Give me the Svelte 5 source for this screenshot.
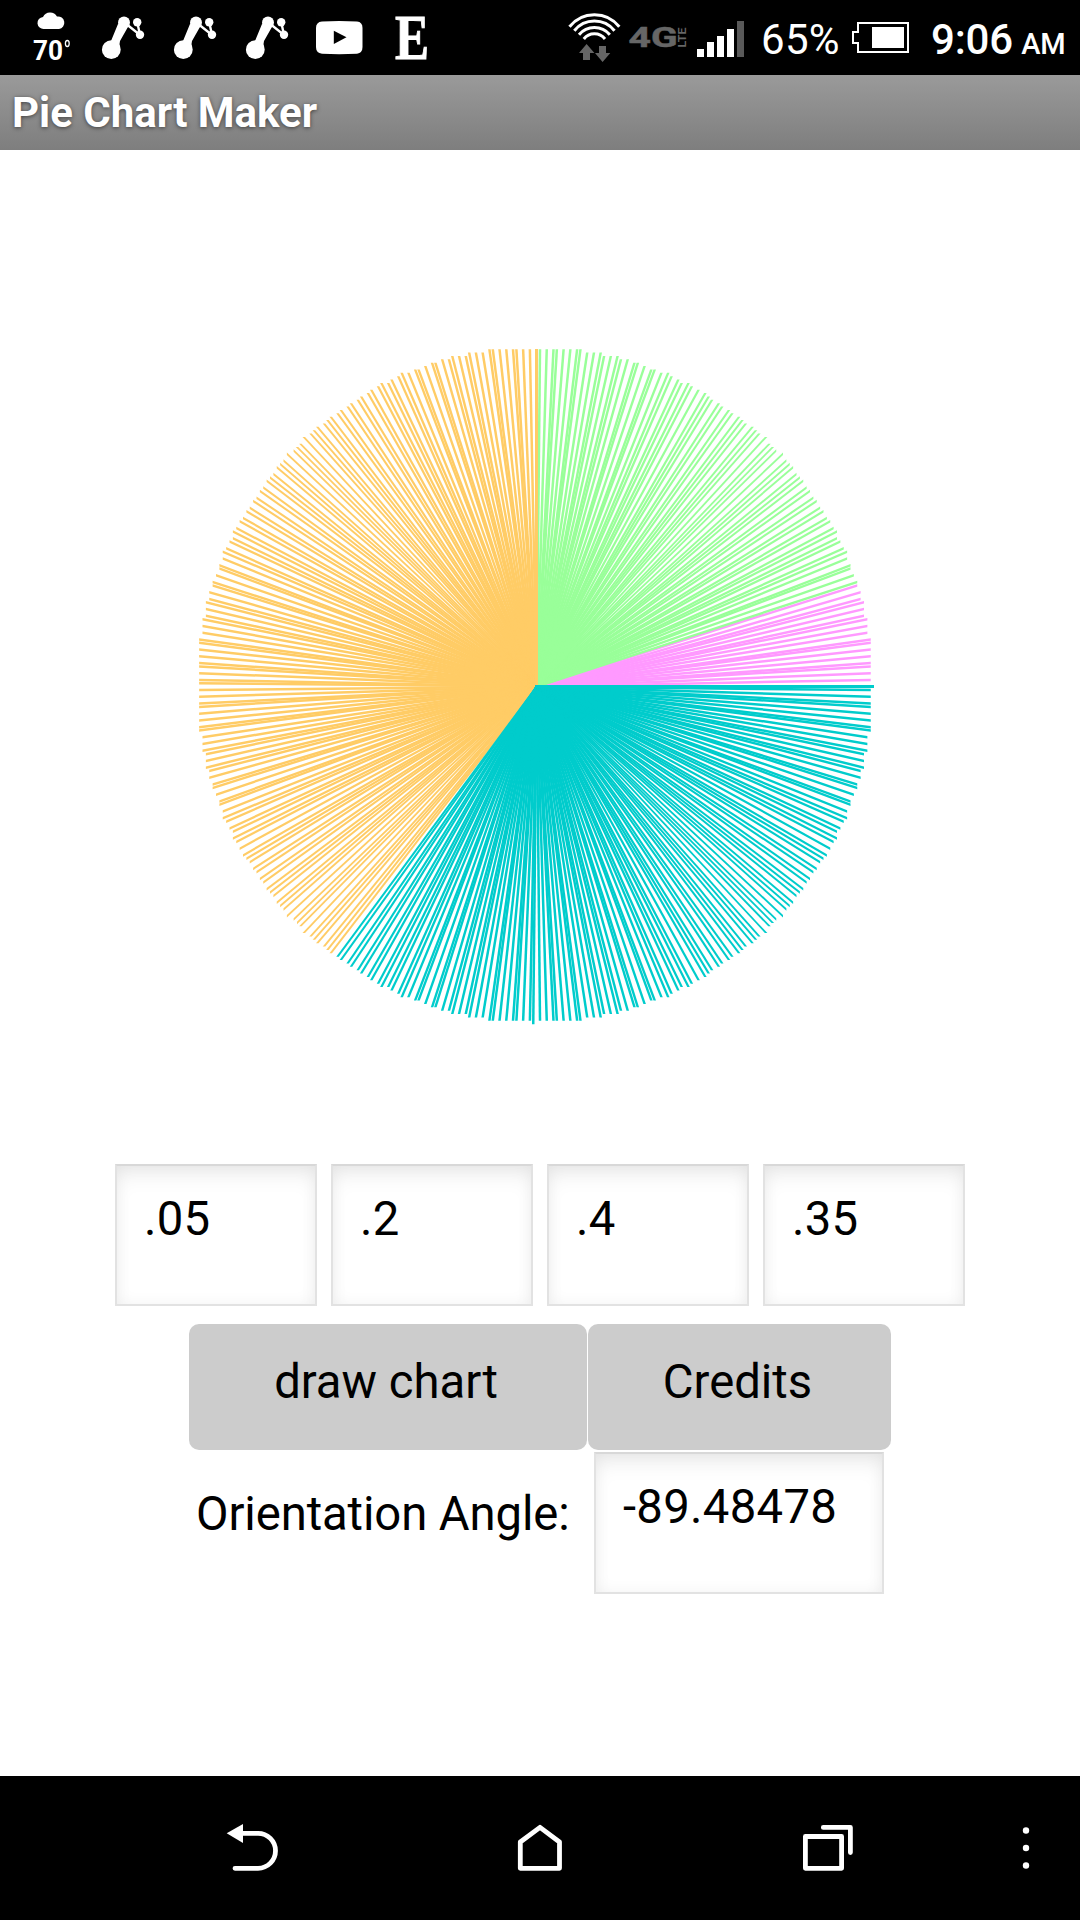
<script>
  const UNIT = 3.375;
  const CENTER = 159;
  const RADIUS = 100;
  const HALF = 1.25;

  const values = ['.05', '.2', '.4', '.35'];
  const colors = ['#ff99ff', '#99ff99', '#ffcc66', '#00cccc'];

  // The canvas works on whole grid units, so every ray end is truncated.
  // Each ray has a constant thickness along its minor axis.
  function ray(angle) {
    const a = (angle * Math.PI) / 180;
    const x = Math.floor(CENTER + RADIUS * Math.cos(a) + (angle === 270 ? -0.01 : 1e-9)) * UNIT;
    const y = Math.floor(CENTER - RADIUS * Math.sin(a) + (angle === 180 ? -0.01 : 1e-9)) * UNIT;
    const c = CENTER * UNIT;
    return Math.abs(x - c) > Math.abs(y - c)
      ? `M${c} ${c - HALF}L${x} ${y - HALF}V${y + HALF}L${c} ${c + HALF}z`
      : `M${c - HALF} ${c}L${x - HALF} ${y}H${x + HALF}L${c + HALF} ${c}z`;
  }

  let start = 0;
  const slices = values.map((value, i) => {
    const end = start + Math.round(Number(value) * 360);
    const rays = [];
    for (let a = start; a < end; a++) {
      if (a !== 0 && a !== 90) rays.push(ray(a));
    }
    start = end;
    return { rays, color: colors[i] };
  });
</script>

<div class="screen">
  <header class="status">
    <svg width="70" height="75" viewBox="28 0 70 75">
      <path fill="#fff" d="M44 29a6 6 0 0 1-1-12a8 8 0 0 1 14-.5a6.3 6.3 0 0 1 2 12.500z" />
      <text class="temp" x="33" y="60" textLength="30" lengthAdjust="spacingAndGlyphs">70</text>
      <ellipse cx="67.300" cy="43.500" rx="1.900" ry="3" fill="none" stroke="#fff" stroke-width="1.300" />
    </svg>
    {#each [0, 1, 2] as n (n)}
      <svg width="72" height="75" viewBox="98 0 72 75">
        <g fill="#fff">
          <circle cx="111.300" cy="49.700" r="9.400" />
          <circle cx="124" cy="22.600" r="6" />
          <circle cx="137.200" cy="22.300" r="4.200" />
          <circle cx="140" cy="34.800" r="4.200" />
          <path d="M118 24L111 41Q117 42 120 48Q119 44 120 41L128.500 26z" />
        </g>
        <path d="M125 23L140 35L137.200 22" fill="none" stroke="#fff" stroke-width="2.400" />
      </svg>
    {/each}
    <svg width="72" height="75" viewBox="314 0 72 75">
      <path fill="#fff" d="M322 21.500Q339 20.500 357 21.500Q362.500 22 362.500 28V47Q362.500 53 357 53.800Q339 54.500 322 53.800Q316 53 316 47V28Q316 22 322 21.500z" />
      <path d="M333.800 30.700V44L346.500 37.300z" />
    </svg>
    <svg width="72" height="75" viewBox="386 0 72 75">
      <text class="etsy" x="395" y="58.600" textLength="34" lengthAdjust="spacingAndGlyphs">E</text>
    </svg>
    <div class="spacer"></div>
    <svg width="66" height="75" viewBox="560 0 66 75">
      <g fill="none" stroke="#fff" stroke-width="3">
        <path d="M569.500 26.800A31.700 31.700 0 0 1 619.300 26.800" />
        <path d="M574.300 30.800A25.700 25.700 0 0 1 614.500 30.800" />
        <path d="M579 34.800A20 20 0 0 1 609.800 34.800" />
        <path d="M583.800 39A13.500 13.500 0 0 1 605 39" />
      </g>
      <path fill="#666" d="M586.600 44L594.400 53H590V60H583V53H579zM599 46H606V53H610.300L602.600 62L595 53H599z" />
    </svg>
    <svg width="66" height="75" viewBox="626 0 66 75">
      <text class="net" x="628.500" y="47" textLength="49" lengthAdjust="spacingAndGlyphs">4G</text>
      <text class="lte" transform="translate(686 47.500) rotate(-90)" textLength="20" lengthAdjust="spacingAndGlyphs">LTE</text>
    </svg>
    <svg width="58" height="75" viewBox="692 0 58 75">
      <path fill="#fff" d="M697 49h7v8h-7zM707 42h7v15h-7zM717 36h7v21h-7zM727 29h7v28h-7z" />
      <path fill="#595959" d="M737 21h7v36h-7z" />
    </svg>
    <span class="percent">65%</span>
    <svg width="64" height="75" viewBox="850 0 64 75">
      <path d="M858 23H908V52H858V43H853V32H858z" fill="none" stroke="#fff" stroke-width="2" />
      <path d="M872 27h32v21h-32z" fill="#fff" />
    </svg>
    <span class="time">9:06 <small>AM</small></span>
  </header>

  <div class="title">Pie Chart Maker</div>

  <main>
    <svg class="chart" width="1080" height="1012" viewBox="0 0 1080 1012">
      {#each slices as slice, i (i)}
        <g fill={slice.color}>
          {#each slice.rays as d, n (n)}
            <path {d} />
          {/each}
          {#if i === 2}
            <rect x="535" y="199" width="3" height="338" />
          {/if}
        </g>
      {/each}
      <rect x="535" y="535" width="339" height="3" fill={colors[3]} />
    </svg>

    <div class="fields">
      {#each values as value (value)}
        <div class="field">{value}</div>
      {/each}
    </div>

    <div class="buttons">
      <button class="draw">draw chart</button>
      <button class="credits">Credits</button>
    </div>

    <div class="orientation">
      <span class="label">Orientation Angle:</span>
      <div class="field angle">-89.48478</div>
    </div>
  </main>

  <nav>
    <svg width="1080" height="144" viewBox="0 1776 1080 144" fill="none" stroke="#fff" stroke-width="4.800" stroke-linecap="round" stroke-linejoin="round">
      <path d="M235 1868.300H258A17.500 17.500 0 0 0 258 1833.300H242" />
      <path d="M226.700 1833.300L243 1824V1843z" fill="#fff" stroke="none" />
      <path d="M520.300 1868.300V1842L540 1827.300L559.500 1842V1868.300z" />
      <path d="M805.400 1836.500H841.600V1868.300H805.400zM823.300 1827.400H850.400V1852.500" />
      <g fill="#fff" stroke="none">
        <circle cx="1026" cy="1830.500" r="3.200" />
        <circle cx="1026" cy="1848" r="3.200" />
        <circle cx="1026" cy="1865.500" r="3.200" />
      </g>
    </svg>
  </nav>
</div>

<style>
  :global(body) {
    background: #fff;
  }
  .screen {
    width: 1080px;
    height: 1920px;
    display: flex;
    flex-direction: column;
    overflow: hidden;
    font-family: Roboto, sans-serif;
    color: #000;
  }
  svg {
    display: block;
    flex: none;
  }
  .status {
    height: 75px;
    flex: none;
    box-sizing: border-box;
    padding-left: 28px;
    background: #000;
    color: #fff;
    display: flex;
    line-height: 75px;
    white-space: nowrap;
  }
  .spacer {
    flex: 1;
  }
  .temp {
    font: 700 28px Roboto, sans-serif;
    fill: #fff;
  }
  .etsy {
    font: 700 64px 'Liberation Serif', serif;
    fill: #fff;
    stroke: #fff;
    stroke-width: 1px;
  }
  .net {
    font: 700 27px Roboto, sans-serif;
    fill: #666;
    stroke: #666;
    stroke-width: 0.500px;
  }
  .lte {
    font: 700 10.500px Roboto, sans-serif;
    fill: #666;
  }
  .percent {
    width: 89px;
    padding-left: 11px;
    font-size: 42px;
    line-height: 79px;
    letter-spacing: 0.300px;
  }
  .time {
    width: 149px;
    padding-left: 17px;
    font-size: 42px;
    font-weight: 500;
    line-height: 79px;
    letter-spacing: -0.200px;
  }
  .time small {
    font-size: 29px;
    letter-spacing: 0;
    margin-left: -2px;
  }
  .title {
    height: 75px;
    flex: none;
    box-sizing: border-box;
    padding-left: 12px;
    background: linear-gradient(#9a9a9a, #7e7e7e);
    color: #fff;
    font-size: 42px;
    font-weight: 700;
    line-height: 76px;
    text-shadow: 0 1px 4px rgba(0, 0, 0, 0.550);
  }
  main {
    height: 1626px;
    flex: none;
    display: flex;
    flex-direction: column;
    align-items: center;
  }
  .chart {
    height: 1012px;
  }
  .fields {
    display: flex;
    gap: 14px;
    padding-top: 2px;
  }
  .field {
    width: 202px;
    height: 142px;
    box-sizing: border-box;
    border: 2px solid #e2e2e2;
    border-top-color: #d8d8d8;
    padding-left: 27px;
    box-shadow: inset 0 14px 22px -6px rgba(0, 0, 0, 0.080), inset 0 0 16px rgba(0, 0, 0, 0.050);
    font-size: 47.250px;
    line-height: 107px;
    letter-spacing: 0.300px;
  }
  .buttons {
    display: flex;
    gap: 1px;
    padding-top: 18px;
  }
  button {
    height: 126px;
    padding: 0 4px 11px 0;
    border: 0;
    border-radius: 10px;
    background: #ccc;
    color: #000;
    font: 47.250px Roboto, sans-serif;
    letter-spacing: 0;
  }
  .draw {
    width: 398px;
  }
  .credits {
    width: 303px;
  }
  .orientation {
    display: flex;
    width: 688px;
    padding-top: 2px;
  }
  .label {
    width: 398px;
    font-size: 47.250px;
    line-height: 125px;
    letter-spacing: -0.100px;
    white-space: nowrap;
  }
  .angle {
    width: 290px;
  }
  nav {
    height: 144px;
    flex: none;
    background: #000;
  }
</style>
